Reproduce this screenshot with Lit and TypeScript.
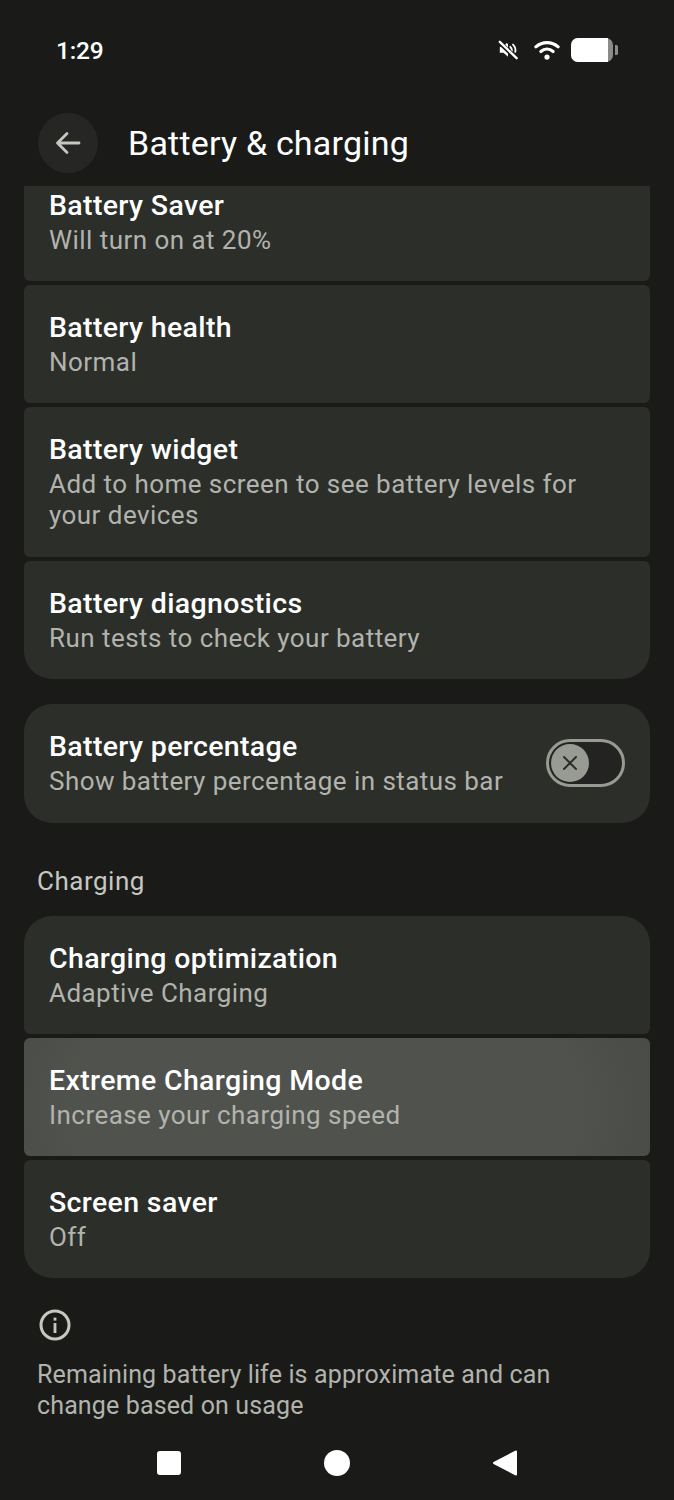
import { LitElement, html, css, svg } from 'lit';
import { customElement } from 'lit/decorators.js';

interface Row {
  title: string;
  sub: string;
  cls?: string;
}

const topRows: Row[] = [
  { title: 'Battery Saver', sub: 'Will turn on at 20%', cls: 'clip' },
  { title: 'Battery health', sub: 'Normal' },
  { title: 'Battery widget', sub: 'Add to home screen to see battery levels for your devices', cls: 'wide' },
  { title: 'Battery diagnostics', sub: 'Run tests to check your battery' },
];

const chargingRows: Row[] = [
  { title: 'Charging optimization', sub: 'Adaptive Charging' },
  { title: 'Extreme Charging Mode', sub: 'Increase your charging speed', cls: 'pressed' },
  { title: 'Screen saver', sub: 'Off' },
];

@customElement('app-root')
export class AppRoot extends LitElement {
  static styles = css`
    :host {
      display: block;
      width: 674px;
      height: 1500px;
      overflow: hidden;
      background: #1a1b19;
      color: #fff;
      font-family: Roboto, "Open Sans", sans-serif;
    }

    .status {
      height: 100px;
      box-sizing: border-box;
      padding: 35px 56px 0 56px;
      display: flex;
      justify-content: space-between;
      align-items: flex-start;
    }

    .time {
      font-size: 24.5px;
      line-height: 31px;
      font-weight: 500;
      letter-spacing: -0.2px;
    }

    .status-icons {
      display: flex;
      align-items: center;
      height: 30px;
    }

    .mute {
      margin-right: 16px;
    }

    .wifi {
      margin-right: 11px;
    }

    .topbar {
      height: 86px;
      box-sizing: border-box;
      padding: 13px 0 0 38px;
      display: flex;
      align-items: flex-start;
      gap: 30px;
    }

    .back {
      width: 60px;
      height: 60px;
      border-radius: 50%;
      background: #262725;
      display: flex;
      align-items: center;
      justify-content: center;
    }

    .page-title {
      font-size: 34px;
      line-height: 60px;
      font-weight: 440;
      letter-spacing: 0.2px;
    }

    .scroll {
      height: 1236px;
      overflow: hidden;
      padding: 0 24px;
    }

    .group {
      display: flex;
      flex-direction: column;
      gap: 4px;
    }

    .row {
      background: #2c2e2a;
      border-radius: 6px;
      padding: 24px 25px 0 25px;
      height: 118px;
      box-sizing: border-box;
    }

    .row.clip {
      height: 95px;
      padding-top: 1px;
      border-radius: 0 0 6px 6px;
    }

    .row.wide {
      height: 150px;
    }

    .row.pressed {
      background: radial-gradient(ellipse 420px 260px at 300px 70px, #50524e 0%, #50524e 60%, #444642 100%);
    }

    .group .row:first-child:not(.clip) {
      border-top-left-radius: 28px;
      border-top-right-radius: 28px;
    }

    .group .row:last-child {
      border-bottom-left-radius: 28px;
      border-bottom-right-radius: 28px;
    }

    .title {
      font-size: 28.5px;
      line-height: 38px;
      font-weight: 480;
      letter-spacing: 0.35px;
    }

    .sub {
      font-size: 26px;
      line-height: 31px;
      color: #b1b3ac;
      letter-spacing: 0.45px;
    }

    .switch-row {
      margin-top: 25px;
      height: 119px;
      background: #2c2e2a;
      border-radius: 28px;
      padding: 24px 25px 0 25px;
      box-sizing: border-box;
      display: flex;
      justify-content: space-between;
    }

    .switch {
      width: 79px;
      height: 48px;
      margin-top: 11px;
      box-sizing: border-box;
      border: 3px solid #989a94;
      border-radius: 24px;
      background: #232421;
      padding: 2px;
    }

    .thumb {
      width: 38px;
      height: 38px;
      border-radius: 50%;
      background: #989a94;
      display: flex;
      align-items: center;
      justify-content: center;
    }

    .section {
      margin-top: 40px;
      height: 53px;
      padding-left: 13px;
      font-size: 26px;
      line-height: 36px;
      color: #c6c8c0;
      letter-spacing: 0.5px;
    }

    .info {
      padding: 31px 13px 0 13px;
    }

    .info svg {
      display: block;
      margin: 0 0 18px 2px;
    }

    .info-text {
      font-size: 25px;
      line-height: 31px;
      color: #b1b3ac;
      letter-spacing: 0.14px;
    }

    .nav {
      height: 78px;
      box-sizing: border-box;
      padding-top: 4px;
      display: flex;
      justify-content: center;
      align-items: center;
      gap: 143px;
    }

    .nav svg {
      display: block;
    }
  `;

  renderRow(r: Row) {
    return html`
      <div class="row ${r.cls ?? ''}">
        <div class="title">${r.title}</div>
        <div class="sub">${r.sub}</div>
      </div>
    `;
  }

  render() {
    return html`
      <div class="status">
        <div class="time">1:29</div>
        <div class="status-icons">
          <svg class="mute" width="20" height="22" viewBox="0 0 22 22">
            <path fill="#fff" d="M2 7.5h4l3.5-4.2 1.5 1.2v14l-5-4.5H2z"></path>
            <path fill="none" stroke="#fff" stroke-width="2" stroke-linecap="round" d="M13.500 7.500a5 5 0 0 1 1.500 5M16.500 5a8.500 8.500 0 0 1 2.500 8"></path>
            <path stroke="#1a1b19" stroke-width="5" d="M1 2l20 19"></path>
            <path stroke="#fff" stroke-width="2.600" stroke-linecap="round" d="M2 2l18.500 18"></path>
          </svg>
          <svg class="wifi" width="26" height="22" viewBox="0 0 28 22">
            <g fill="none" stroke="#fff" stroke-width="3.400" stroke-linecap="round">
              <path d="M2 7.600C9 1.600 19 1.600 26 7.600"></path>
              <path d="M7.400 12.600c4-3.400 9.200-3.400 13.200 0"></path>
            </g>
            <circle cx="14" cy="18.600" r="2.800" fill="#fff"></circle>
          </svg>
          <svg width="47" height="24" viewBox="0 0 47 24">
            <rect x="0" y="0" width="42" height="24" rx="7" fill="#8b8c88"></rect>
            <path fill="#fff" d="M7 0h30v24H7a7 7 0 0 1-7-7V7a7 7 0 0 1 7-7z"></path>
            <path fill="#8b8c88" d="M44 7h1.500a1.500 1.500 0 0 1 1.500 1.500v7a1.500 1.500 0 0 1-1.500 1.500H44z"></path>
          </svg>
        </div>
      </div>

      <div class="topbar">
        <div class="back">
          <svg width="28" height="28" viewBox="0 0 28 28" fill="none" stroke="#c6c8c0" stroke-width="2.800" stroke-linecap="round" stroke-linejoin="round">
            <path d="M25 14H4M13 4.500L3.500 14l9.500 9.500"></path>
          </svg>
        </div>
        <div class="page-title">Battery &amp; charging</div>
      </div>

      <div class="scroll">
        <div class="group">${topRows.map((r) => this.renderRow(r))}</div>

        <div class="switch-row">
          <div>
            <div class="title">Battery percentage</div>
            <div class="sub">Show battery percentage in status bar</div>
          </div>
          <div class="switch">
            <div class="thumb">
              <svg width="18" height="18" viewBox="0 0 18 18" stroke="#2c2e2a" stroke-width="2" stroke-linecap="round">
                ${svg`<path d="M3 3l12 12M15 3L3 15"></path>`}
              </svg>
            </div>
          </div>
        </div>

        <div class="section">Charging</div>
        <div class="group">${chargingRows.map((r) => this.renderRow(r))}</div>

        <div class="info">
          <svg width="32" height="32" viewBox="0 0 32 32">
            <circle cx="16" cy="16" r="14" fill="none" stroke="#c6c8c0" stroke-width="3"></circle>
            <rect x="14.600" y="14" width="2.800" height="10" fill="#c6c8c0"></rect>
            <rect x="14.600" y="8.600" width="2.800" height="3" fill="#c6c8c0"></rect>
          </svg>
          <div class="info-text">Remaining battery life is approximate and can change based on usage</div>
        </div>
      </div>

      <div class="nav">
        <svg width="24" height="24" viewBox="0 0 24 24"><rect width="24" height="24" rx="3" fill="#fff"></rect></svg>
        <svg width="26" height="26" viewBox="0 0 26 26"><circle cx="13" cy="13" r="13" fill="#fff"></circle></svg>
        <svg width="24" height="26" viewBox="0 0 24 26"><path fill="#fff" stroke="#fff" stroke-width="2" stroke-linejoin="round" d="M23 1.500V24.500L1 13z"></path></svg>
      </div>
    `;
  }
}
